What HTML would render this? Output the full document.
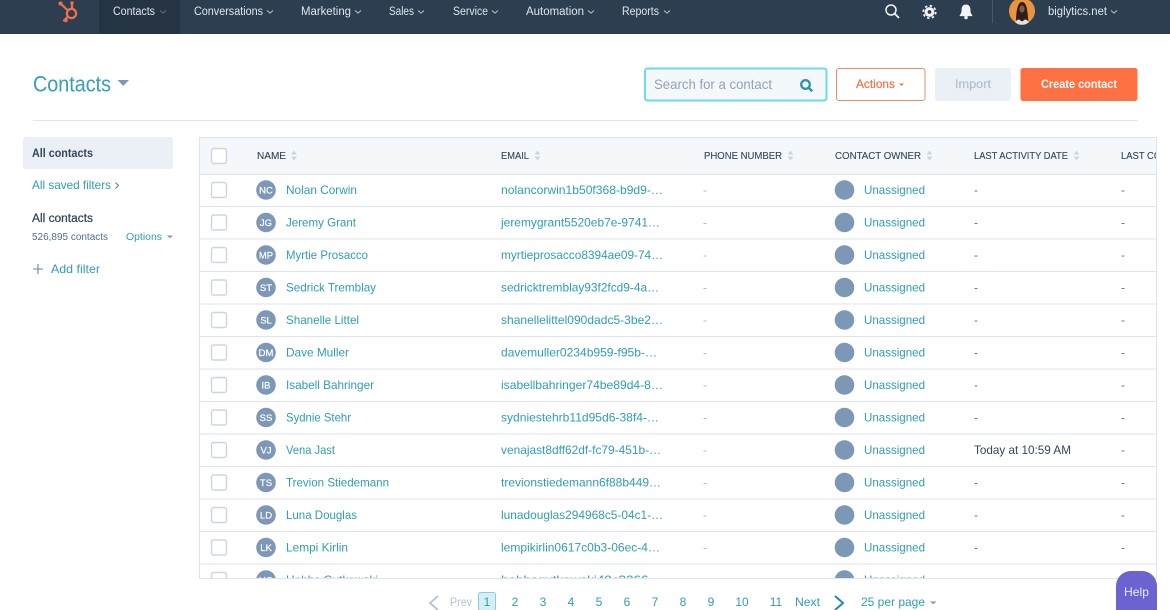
<!DOCTYPE html>
<html lang="en"><head><meta charset="utf-8"><title>Contacts</title>
<style>
html,body{margin:0;padding:0;background:#fff;width:1170px;height:610px;overflow:hidden}
body>svg{display:block;filter:blur(.35px)}
text{font-family:"Liberation Sans",sans-serif;font-size:12px}
.nav{fill:#dfe6ee;font-size:11.5px}
.l{fill:#2f9db3}
.d{fill:#33475b}
.g{fill:#5f7488}
.h{fill:#33475b;font-size:10.2px;stroke:#33475b;stroke-width:.12}
.m{fill:#a9bacb}
.i{fill:#fff;font-size:9.5px;text-anchor:middle;stroke:#fff;stroke-width:.2}
.p{fill:#2f9db3;font-size:12px;text-anchor:middle}
</style></head><body>
<svg width="1170" height="610" viewBox="0 0 1170 610" xmlns="http://www.w3.org/2000/svg">
<rect width="1170" height="610" fill="#fff"/>
<!-- top nav -->
<rect width="1170" height="34" fill="#2d3e50"/>
<rect x="99" width="81" height="34" fill="#253443"/>
<g fill="none" stroke="#f2714b" stroke-width="2.2" stroke-linecap="round">
<circle cx="71.5" cy="13.5" r="4.6"/>
<path d="M61.5 4.5L68 10.5M72 8V3.5M67.5 17L64 20.5"/>
</g>
<g fill="#f2714b"><circle cx="60.5" cy="3.5" r="2"/><circle cx="72" cy="3" r="1.7"/><circle cx="66" cy="20.5" r="1.8"/></g>
<text class="nav" x="113" y="15" textLength="42" lengthAdjust="spacingAndGlyphs">Contacts</text>
<text class="nav" x="194" y="15" textLength="69" lengthAdjust="spacingAndGlyphs">Conversations</text>
<text class="nav" x="301" y="15" textLength="50" lengthAdjust="spacingAndGlyphs">Marketing</text>
<text class="nav" x="389" y="15" textLength="25" lengthAdjust="spacingAndGlyphs">Sales</text>
<text class="nav" x="453" y="15" textLength="35" lengthAdjust="spacingAndGlyphs">Service</text>
<text class="nav" x="526" y="15" textLength="58" lengthAdjust="spacingAndGlyphs">Automation</text>
<text class="nav" x="622" y="15" textLength="37" lengthAdjust="spacingAndGlyphs">Reports</text>
<g fill="none" stroke="#b9c6d4" stroke-width=".9">
<path d="M160 10.5l3 2.6 3-2.6" stroke="#7a6a68"/><path d="M267 10.5l3 2.6 3-2.6"/><path d="M355 10.5l3 2.6 3-2.6"/><path d="M418 10.5l3 2.6 3-2.6"/><path d="M492 10.5l3 2.6 3-2.6"/><path d="M588 10.5l3 2.6 3-2.6"/><path d="M664 10.5l3 2.6 3-2.6"/><path d="M1111 10.5l3 2.6 3-2.6"/>
</g>
<g fill="none" stroke="#f2f5f8">
<circle cx="891" cy="10" r="5" stroke-width="1.5"/><path d="M894.8 13.8l4.2 4.2" stroke-width="1.8"/>
<circle cx="929.5" cy="12" r="3.4" stroke-width="3"/><circle cx="929.5" cy="12" r="6.2" stroke-width="1.8" stroke-dasharray="2.4 2.47"/>
</g>
<path d="M966 4.5c-3 0-4.4 2.3-4.4 5 0 3-.6 4.2-1.9 5.6v1h12.6v-1c-1.3-1.4-1.9-2.6-1.9-5.6 0-2.7-1.4-5-4.4-5z" fill="#f2f5f8"/>
<circle cx="966" cy="17.5" r="1.8" fill="#f2f5f8"/>
<rect x="992" y="0" width="1" height="23" fill="#46586b"/>
<circle cx="1022" cy="11" r="13" fill="#e8953f"/>
<path d="M1016 22c0-8 1-20 6-20 5.500 0 5.500 11 6.500 20z" fill="#2c1f1c"/>
<ellipse cx="1022" cy="9" rx="2.600" ry="3.600" fill="#8a5a42"/>
<path d="M1015 22c2-2 3-2.500 4-2.500l3 2 3-2c1 0 2 .5 4 2.500-2 2-4 2.800-7 2.800s-5-.8-7-2.800z" fill="#e8e0da"/>
<text class="nav" x="1048" y="15" textLength="59" lengthAdjust="spacingAndGlyphs">biglytics.net</text>

<!-- header -->
<text x="33" y="91.500" fill="#33a0b5" style="font-size:22px" textLength="78" lengthAdjust="spacingAndGlyphs">Contacts</text>
<path d="M117.500 80h11.500l-5.750 6z" fill="#7c98b6"/>
<rect x="645" y="68.500" width="181.500" height="32" rx="2.500" fill="#f5f8fa" stroke="#6bdbe8" stroke-width="2"/>
<text x="654" y="89" fill="#8ea3ba" style="font-size:14px" textLength="118" lengthAdjust="spacingAndGlyphs">Search for a contact</text>
<circle cx="805.500" cy="84.500" r="4.300" fill="none" stroke="#2b93ad" stroke-width="2.300"/><path d="M808.700 87.700l3.500 3.500" stroke="#2b93ad" stroke-width="2.500"/>
<rect x="836.500" y="68.500" width="88.500" height="32" rx="2.500" fill="#fff" stroke="#f2876a"/>
<text x="856" y="88" fill="#f2714b" style="stroke:#f2714b;stroke-width:.2" textLength="39" lengthAdjust="spacingAndGlyphs">Actions</text>
<path d="M899 83.500h5l-2.500 2.500z" fill="#f2714b"/>
<rect x="935" y="68" width="76" height="33" rx="2.500" fill="#eaf0f6"/>
<text x="955" y="88" fill="#b0c1d4" style="stroke:#b0c1d4;stroke-width:.25" textLength="36" lengthAdjust="spacingAndGlyphs">Import</text>
<rect x="1020.500" y="68" width="117" height="33" rx="2.500" fill="#ff7143"/>
<text x="1041" y="88" fill="#fff" style="font-weight:bold" textLength="76" lengthAdjust="spacingAndGlyphs">Create contact</text>
<rect x="33" y="120" width="1104.500" height="1" fill="#dfe3eb"/>

<!-- sidebar -->
<rect x="23" y="137" width="150" height="32" rx="2.500" fill="#eaf0f6"/>
<text x="32" y="157" class="d" style="font-weight:bold;font-size:11.500px" textLength="61" lengthAdjust="spacingAndGlyphs">All contacts</text>
<text x="32" y="189" class="l" textLength="79" lengthAdjust="spacingAndGlyphs">All saved filters</text>
<path d="M115.500 182.500l3 3-3 3" fill="none" stroke="#5a7790" stroke-width="1"/>
<text x="32" y="222" class="d" style="font-size:11.500px;stroke:#33475b;stroke-width:.25" textLength="61" lengthAdjust="spacingAndGlyphs">All contacts</text>
<text x="32" y="240" fill="#516f90" style="font-size:10px" textLength="76" lengthAdjust="spacingAndGlyphs">526,895 contacts</text>
<text x="126" y="240" class="l" style="font-size:10px" textLength="36" lengthAdjust="spacingAndGlyphs">Options</text>
<path d="M167 235.500h6l-3 2.800z" fill="#7c98b6"/>
<path d="M38 264v10M33 269h10" stroke="#5f87a3" stroke-width="1.100"/>
<text x="51" y="273" class="l" textLength="49" lengthAdjust="spacingAndGlyphs">Add filter</text>

<!-- table -->
<rect x="199.500" y="137.500" width="957" height="441" fill="#fff" stroke="#dfe3eb"/>
<rect x="200" y="138" width="956" height="36" fill="#f5f8fa"/>
<rect x="199" y="174" width="958" height="1" fill="#dfe3eb"/>
<rect x="211.500" y="148.500" width="15" height="15" rx="2" fill="#fff" stroke="#cbd6e2" stroke-width="1.400"/>
<text class="h" x="257" y="159" textLength="29" lengthAdjust="spacingAndGlyphs">NAME</text>
<text class="h" x="501" y="159" textLength="28" lengthAdjust="spacingAndGlyphs">EMAIL</text>
<text class="h" x="704" y="159" textLength="78" lengthAdjust="spacingAndGlyphs">PHONE NUMBER</text>
<text class="h" x="835" y="159" textLength="86" lengthAdjust="spacingAndGlyphs">CONTACT OWNER</text>
<text class="h" x="974" y="159" textLength="94" lengthAdjust="spacingAndGlyphs">LAST ACTIVITY DATE</text>
<svg x="1121" y="150" width="35" height="12"><text class="h" x="0" y="9" textLength="84" lengthAdjust="spacingAndGlyphs">LAST CONTACTED</text></svg>
<g fill="#cbd6e2">
<path d="M291 154.500l3-4 3 4zM291 156.500l3 4 3-4z"/><path d="M534.500 154.500l3-4 3 4zM534.500 156.500l3 4 3-4z"/><path d="M787.500 154.500l3-4 3 4zM787.500 156.500l3 4 3-4z"/><path d="M926.500 154.500l3-4 3 4zM926.500 156.500l3 4 3-4z"/><path d="M1073.500 154.500l3-4 3 4zM1073.500 156.500l3 4 3-4z"/>
</g>
<g fill="#dfe3eb">
<rect x="200" y="206" width="956" height="1"/><rect x="200" y="238.500" width="956" height="1"/><rect x="200" y="271" width="956" height="1"/><rect x="200" y="303.500" width="956" height="1"/><rect x="200" y="336" width="956" height="1"/><rect x="200" y="368.500" width="956" height="1"/><rect x="200" y="401" width="956" height="1"/><rect x="200" y="433.500" width="956" height="1"/><rect x="200" y="466" width="956" height="1"/><rect x="200" y="498.500" width="956" height="1"/><rect x="200" y="531" width="956" height="1"/><rect x="200" y="563.500" width="956" height="1"/>
</g>
<g fill="#fff" stroke="#cbd6e2" stroke-width="1.400">
<rect x="211.500" y="182.500" width="15" height="15" rx="2"/><rect x="211.500" y="215" width="15" height="15" rx="2"/><rect x="211.500" y="247.500" width="15" height="15" rx="2"/><rect x="211.500" y="280" width="15" height="15" rx="2"/><rect x="211.500" y="312.500" width="15" height="15" rx="2"/><rect x="211.500" y="345" width="15" height="15" rx="2"/><rect x="211.500" y="377.500" width="15" height="15" rx="2"/><rect x="211.500" y="410" width="15" height="15" rx="2"/><rect x="211.500" y="442.500" width="15" height="15" rx="2"/><rect x="211.500" y="475" width="15" height="15" rx="2"/><rect x="211.500" y="507.500" width="15" height="15" rx="2"/><rect x="211.500" y="540" width="15" height="15" rx="2"/>
</g>
<g fill="#7c98b6">
<circle cx="266" cy="190" r="9.800"/><circle cx="266" cy="222.500" r="9.800"/><circle cx="266" cy="255" r="9.800"/><circle cx="266" cy="287.500" r="9.800"/><circle cx="266" cy="320" r="9.800"/><circle cx="266" cy="352.500" r="9.800"/><circle cx="266" cy="385" r="9.800"/><circle cx="266" cy="417.500" r="9.800"/><circle cx="266" cy="450" r="9.800"/><circle cx="266" cy="482.500" r="9.800"/><circle cx="266" cy="515" r="9.800"/><circle cx="266" cy="547.500" r="9.800"/>
<circle cx="844.500" cy="190" r="9.800"/><circle cx="844.500" cy="222.500" r="9.800"/><circle cx="844.500" cy="255" r="9.800"/><circle cx="844.500" cy="287.500" r="9.800"/><circle cx="844.500" cy="320" r="9.800"/><circle cx="844.500" cy="352.500" r="9.800"/><circle cx="844.500" cy="385" r="9.800"/><circle cx="844.500" cy="417.500" r="9.800"/><circle cx="844.500" cy="450" r="9.800"/><circle cx="844.500" cy="482.500" r="9.800"/><circle cx="844.500" cy="515" r="9.800"/><circle cx="844.500" cy="547.500" r="9.800"/>
</g>
<text class="i" x="266" y="193.500">NC</text><text class="i" x="266" y="226">JG</text><text class="i" x="266" y="258.500">MP</text><text class="i" x="266" y="291">ST</text><text class="i" x="266" y="323.500">SL</text><text class="i" x="266" y="356">DM</text><text class="i" x="266" y="388.500">IB</text><text class="i" x="266" y="421">SS</text><text class="i" x="266" y="453.500">VJ</text><text class="i" x="266" y="486">TS</text><text class="i" x="266" y="518.500">LD</text><text class="i" x="266" y="551">LK</text>
<text class="l" x="286" y="194" textLength="71" lengthAdjust="spacingAndGlyphs">Nolan Corwin</text>
<text class="l" x="286" y="226.500" textLength="70" lengthAdjust="spacingAndGlyphs">Jeremy Grant</text>
<text class="l" x="286" y="259" textLength="82" lengthAdjust="spacingAndGlyphs">Myrtie Prosacco</text>
<text class="l" x="286" y="291.500" textLength="90" lengthAdjust="spacingAndGlyphs">Sedrick Tremblay</text>
<text class="l" x="286" y="324" textLength="73" lengthAdjust="spacingAndGlyphs">Shanelle Littel</text>
<text class="l" x="286" y="356.500" textLength="63" lengthAdjust="spacingAndGlyphs">Dave Muller</text>
<text class="l" x="286" y="389" textLength="88" lengthAdjust="spacingAndGlyphs">Isabell Bahringer</text>
<text class="l" x="286" y="421.500" textLength="65" lengthAdjust="spacingAndGlyphs">Sydnie Stehr</text>
<text class="l" x="286" y="454" textLength="49" lengthAdjust="spacingAndGlyphs">Vena Jast</text>
<text class="l" x="286" y="486.500" textLength="103" lengthAdjust="spacingAndGlyphs">Trevion Stiedemann</text>
<text class="l" x="286" y="519" textLength="71" lengthAdjust="spacingAndGlyphs">Luna Douglas</text>
<text class="l" x="286" y="551.500" textLength="62" lengthAdjust="spacingAndGlyphs">Lempi Kirlin</text>
<text class="l" x="501" y="194" textLength="162" lengthAdjust="spacingAndGlyphs">nolancorwin1b50f368-b9d9-…</text>
<text class="l" x="501" y="226.500" textLength="159" lengthAdjust="spacingAndGlyphs">jeremygrant5520eb7e-9741…</text>
<text class="l" x="501" y="259" textLength="162" lengthAdjust="spacingAndGlyphs">myrtieprosacco8394ae09-74…</text>
<text class="l" x="501" y="291.500" textLength="158" lengthAdjust="spacingAndGlyphs">sedricktremblay93f2fcd9-4a…</text>
<text class="l" x="501" y="324" textLength="162" lengthAdjust="spacingAndGlyphs">shanellelittel090dadc5-3be2…</text>
<text class="l" x="501" y="356.500" textLength="156" lengthAdjust="spacingAndGlyphs">davemuller0234b959-f95b-…</text>
<text class="l" x="501" y="389" textLength="162" lengthAdjust="spacingAndGlyphs">isabellbahringer74be89d4-8…</text>
<text class="l" x="501" y="421.500" textLength="158" lengthAdjust="spacingAndGlyphs">sydniestehrb11d95d6-38f4-…</text>
<text class="l" x="501" y="454" textLength="160" lengthAdjust="spacingAndGlyphs">venajast8dff62df-fc79-451b-…</text>
<text class="l" x="501" y="486.500" textLength="160" lengthAdjust="spacingAndGlyphs">trevionstiedemann6f88b449…</text>
<text class="l" x="501" y="519" textLength="162" lengthAdjust="spacingAndGlyphs">lunadouglas294968c5-04c1-…</text>
<text class="l" x="501" y="551.500" textLength="159" lengthAdjust="spacingAndGlyphs">lempikirlin0617c0b3-06ec-4…</text>
<text class="m" x="703" y="194">-</text><text class="m" x="703" y="226.500">-</text><text class="m" x="703" y="259">-</text><text class="m" x="703" y="291.500">-</text><text class="m" x="703" y="324">-</text><text class="m" x="703" y="356.500">-</text><text class="m" x="703" y="389">-</text><text class="m" x="703" y="421.500">-</text><text class="m" x="703" y="454">-</text><text class="m" x="703" y="486.500">-</text><text class="m" x="703" y="519">-</text><text class="m" x="703" y="551.500">-</text>
<text class="l" x="864" y="194" textLength="61" lengthAdjust="spacingAndGlyphs">Unassigned</text><text class="l" x="864" y="226.500" textLength="61" lengthAdjust="spacingAndGlyphs">Unassigned</text><text class="l" x="864" y="259" textLength="61" lengthAdjust="spacingAndGlyphs">Unassigned</text><text class="l" x="864" y="291.500" textLength="61" lengthAdjust="spacingAndGlyphs">Unassigned</text><text class="l" x="864" y="324" textLength="61" lengthAdjust="spacingAndGlyphs">Unassigned</text><text class="l" x="864" y="356.500" textLength="61" lengthAdjust="spacingAndGlyphs">Unassigned</text><text class="l" x="864" y="389" textLength="61" lengthAdjust="spacingAndGlyphs">Unassigned</text><text class="l" x="864" y="421.500" textLength="61" lengthAdjust="spacingAndGlyphs">Unassigned</text><text class="l" x="864" y="454" textLength="61" lengthAdjust="spacingAndGlyphs">Unassigned</text><text class="l" x="864" y="486.500" textLength="61" lengthAdjust="spacingAndGlyphs">Unassigned</text><text class="l" x="864" y="519" textLength="61" lengthAdjust="spacingAndGlyphs">Unassigned</text><text class="l" x="864" y="551.500" textLength="61" lengthAdjust="spacingAndGlyphs">Unassigned</text>
<text class="g" x="974" y="194">-</text><text class="g" x="974" y="226.500">-</text><text class="g" x="974" y="259">-</text><text class="g" x="974" y="291.500">-</text><text class="g" x="974" y="324">-</text><text class="g" x="974" y="356.500">-</text><text class="g" x="974" y="389">-</text><text class="g" x="974" y="421.500">-</text><text class="d" x="974" y="454" textLength="97" lengthAdjust="spacingAndGlyphs">Today at 10:59 AM</text><text class="g" x="974" y="486.500">-</text><text class="g" x="974" y="519">-</text><text class="g" x="974" y="551.500">-</text>
<text class="g" x="1121" y="194">-</text><text class="g" x="1121" y="226.500">-</text><text class="g" x="1121" y="259">-</text><text class="g" x="1121" y="291.500">-</text><text class="g" x="1121" y="324">-</text><text class="g" x="1121" y="356.500">-</text><text class="g" x="1121" y="389">-</text><text class="g" x="1121" y="421.500">-</text><text class="g" x="1121" y="454">-</text><text class="g" x="1121" y="486.500">-</text><text class="g" x="1121" y="519">-</text><text class="g" x="1121" y="551.500">-</text>
<!-- clipped last row -->
<svg x="200" y="564.500" width="956" height="13.500">
<rect x="11.500" y="8" width="15" height="15" rx="2" fill="#fff" stroke="#cbd6e2" stroke-width="1.400"/>
<circle cx="66" cy="15.500" r="9.800" fill="#7c98b6"/>
<text class="i" x="66" y="19">HG</text>
<text class="l" x="86" y="19.500" textLength="92" lengthAdjust="spacingAndGlyphs">Hobbs Gutkowski</text>
<text class="l" x="301" y="19.500" textLength="161" lengthAdjust="spacingAndGlyphs">hobbsgutkowski49c3266…</text>
<circle cx="644.500" cy="15.500" r="9.800" fill="#7c98b6"/>
<text class="l" x="664" y="19.500" textLength="61" lengthAdjust="spacingAndGlyphs">Unassigned</text>
</svg>
<rect x="199" y="578" width="958" height="1" fill="#dfe3eb"/>

<!-- pagination -->
<path d="M438 596l-8 7 8 7" fill="none" stroke="#b0c1d4" stroke-width="1.800"/>
<text x="450" y="606" fill="#b0c1d4" style="font-size:11.500px" textLength="22" lengthAdjust="spacingAndGlyphs">Prev</text>
<rect x="478.500" y="592.500" width="17" height="18" rx="2" fill="#d5eff5" stroke="#7fd1de"/>
<text class="p" x="487" y="606">1</text><text class="p" x="515" y="606">2</text><text class="p" x="543" y="606">3</text><text class="p" x="571" y="606">4</text><text class="p" x="599" y="606">5</text><text class="p" x="627" y="606">6</text><text class="p" x="655" y="606">7</text><text class="p" x="683" y="606">8</text><text class="p" x="711" y="606">9</text><text class="p" x="742" y="606">10</text><text class="p" x="776" y="606">11</text>
<text class="l" x="795" y="606" style="font-size:11.500px" textLength="25" lengthAdjust="spacingAndGlyphs">Next</text>
<path d="M835 596l8 7-8 7" fill="none" stroke="#2b86a1" stroke-width="2"/>
<text class="l" x="861" y="606" textLength="64" lengthAdjust="spacingAndGlyphs">25 per page</text>
<path d="M930 601.500h6.500l-3.250 2.800z" fill="#7c98b6"/>

<!-- help -->
<rect x="1116" y="571" width="41" height="60" rx="15" fill="#6a63d0"/>
<text x="1124" y="596" fill="#f0effb" textLength="25" lengthAdjust="spacingAndGlyphs">Help</text>
</svg>
</body></html>
